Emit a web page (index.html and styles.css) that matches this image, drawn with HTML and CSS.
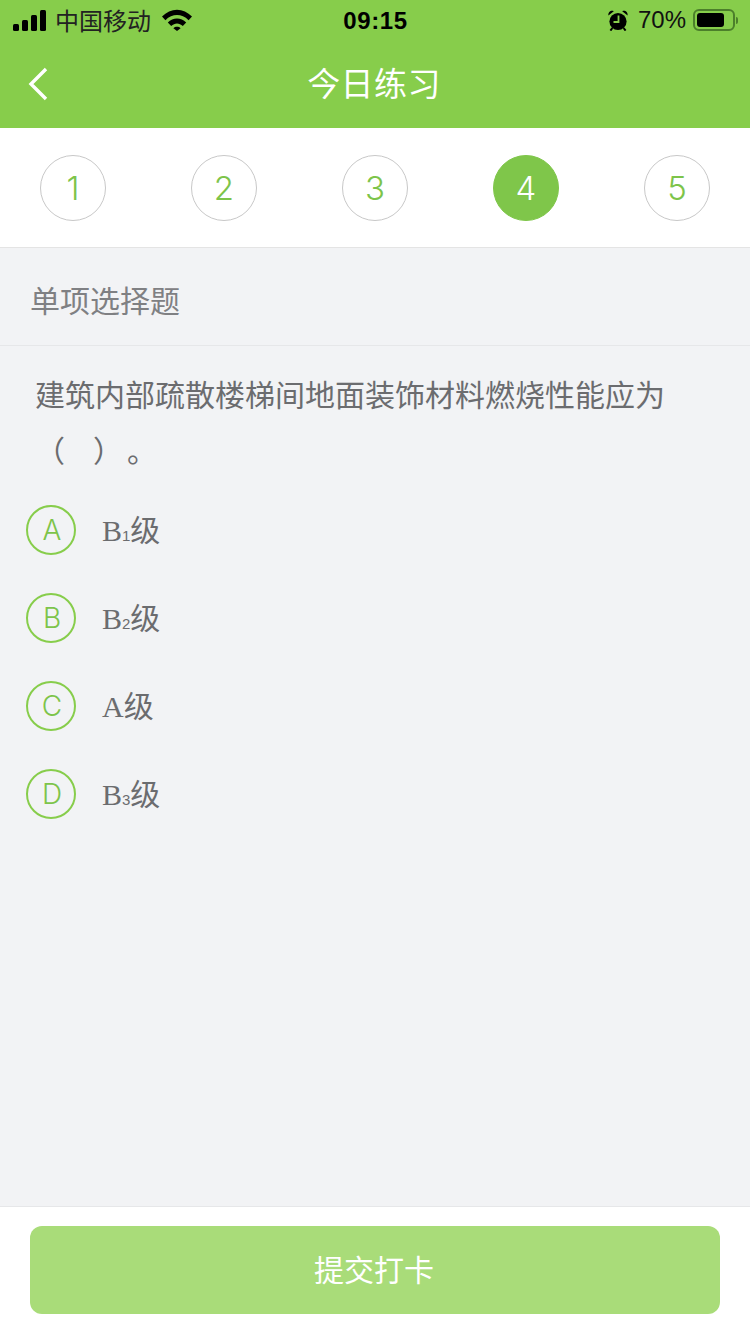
FILE: index.html
```html
<!DOCTYPE html>
<html lang="zh-CN">
<head>
  <meta charset="UTF-8">
  <meta name="viewport" content="width=device-width, initial-scale=1.0">
  <title>今日练习</title>
  <link rel="stylesheet" href="styles.css">
</head>
<body>
  <div class="page">
    <header class="top">
      <!-- iOS status bar -->
      <div class="status">
        <div class="status-left">
          <div class="signal"><i></i><i></i><i></i><i></i></div>
          <span class="carrier">中国移动</span>
          <svg class="wifi" width="30" height="22" viewBox="0 0 30 22">
            <path d="M0 7.6 C 8.5 -1.6 21.5 -1.6 30 7.6 L 26.6 11.2 C 19.6 4.4 10.4 4.4 3.4 11.2 Z"/>
            <path d="M5.8 13.6 C 11 8.2 19 8.2 24.2 13.6 L 20.8 17 C 17.2 13.6 12.8 13.6 9.2 17 Z"/>
            <path d="M11.4 19.2 C 13.4 17.4 16.6 17.4 18.6 19.2 L 15 22 Z"/>
          </svg>
        </div>
        <div class="time">09:15</div>
        <div class="status-right">
          <svg class="alarm" width="20" height="21" viewBox="0 0 20 21">
            <circle cx="10" cy="11.5" r="8.6"/>
            <path d="M0.4 5.5 C 0 2 3 0 5.8 1.2 Z M19.6 5.5 C 20 2 17 0 14.2 1.2 Z"/>
            <path d="M4.4 18 L2.4 20.6 M15.6 18 L17.6 20.6" stroke="#000" stroke-width="2" fill="none"/>
            <path d="M10.5 5.5 V12 H5.5" stroke="#87cd4b" stroke-width="1.8" fill="none"/>
          </svg>
          <span class="percent">70%</span>
          <div class="battery"><div class="battery-fill"></div></div>
          <div class="battery-cap"></div>
        </div>
      </div>
      <!-- nav bar -->
      <div class="nav">
        <svg class="back" width="20" height="34" viewBox="0 0 20 34">
          <path d="M18 2 L3 17 L18 32" fill="none" stroke="#fff" stroke-width="3.4"/>
        </svg>
        <h1>今日练习</h1>
      </div>
    </header>

    <div class="steps">
      <div class="step">1</div>
      <div class="step">2</div>
      <div class="step">3</div>
      <div class="step active">4</div>
      <div class="step">5</div>
    </div>

    <div class="type">单项选择题</div>

    <main class="question">
      <p class="stem">建筑内部疏散楼梯间地面装饰材料燃烧性能应为<br>（<span class="gap"></span>）<span class="stop">。</span></p>
      <div class="options">
        <div class="option"><div class="letter">A</div><div class="answer">B<sub>1</sub>级</div></div>
        <div class="option"><div class="letter">B</div><div class="answer">B<sub>2</sub>级</div></div>
        <div class="option"><div class="letter">C</div><div class="answer">A级</div></div>
        <div class="option"><div class="letter">D</div><div class="answer">B<sub>3</sub>级</div></div>
      </div>
    </main>

    <footer class="bottom">
      <button class="submit">提交打卡</button>
    </footer>
  </div>
</body>
</html>
```

FILE: styles.css
```css
* {
  box-sizing: border-box;
  font-family: 'Liberation Sans', 'Noto Sans CJK SC', sans-serif;
}

html, body {
  margin: 0;
  padding: 0;
}

.page {
  width: 750px;
  height: 1334px;
  display: flex;
  flex-direction: column;
  background-color: #f2f3f5;
  overflow: hidden;
}

/* header */
.top {
  height: 128px;
  background-color: #87cd4b;
}

.status {
  height: 40px;
  display: grid;
  grid-template-columns: 1fr auto 1fr;
  align-items: center;
  padding: 0 12px 0 13px;
  color: #000;
}

.status-left, .status-right {
  display: flex;
  align-items: center;
}

.status-right {
  justify-content: flex-end;
}

.signal {
  display: flex;
  align-items: flex-end;
  gap: 3px;
  height: 21px;
  width: 33px;
}

.signal i {
  display: block;
  width: 6px;
  background-color: #000;
  border-radius: 1.5px;
}

.signal i:nth-child(1) { height: 7px; }
.signal i:nth-child(2) { height: 11px; }
.signal i:nth-child(3) { height: 16px; }
.signal i:nth-child(4) { height: 21px; }

.carrier {
  font-size: 24px;
  line-height: 36px;
  padding-top: 3px;
  margin-left: 9px;
  color: #222;
}

.wifi {
  margin-left: 11px;
}

.time {
  font-size: 24px;
  font-weight: 700;
  letter-spacing: 0.6px;
  padding-top: 2px;
}

.alarm {
  margin-right: 10px;
}

.percent {
  font-size: 24px;
  color: #111;
  margin-right: 7px;
}

.battery {
  width: 42px;
  height: 22px;
  border: 2px solid #4c7f2b;
  border-radius: 6px;
  padding: 2px;
}

.battery-fill {
  width: 27px;
  height: 14px;
  background-color: #000;
  border-radius: 3px;
}

.battery-cap {
  width: 2px;
  height: 7px;
  margin-left: 1px;
  background-color: #4c7f2b;
  border-radius: 0 2px 2px 0;
}

.nav {
  height: 88px;
  display: grid;
  grid-template-columns: 1fr auto 1fr;
  align-items: center;
  padding: 0 0 4px 28px;
}

.back {
  display: block;
  margin-top: 4px;
}

.nav h1 {
  margin: 0;
  font-size: 33px;
  font-weight: 400;
  color: #fff;
  letter-spacing: 0.4px;
  transform: translateX(-15px);
}

/* number row */
.steps {
  height: 120px;
  padding: 0 40px;
  display: flex;
  justify-content: space-between;
  align-items: center;
  background-color: #fff;
  border-bottom: 1px solid #e4e4e4;
}

.step {
  width: 66px;
  height: 66px;
  border: 1px solid #c8c8c8;
  border-radius: 50%;
  display: flex;
  align-items: center;
  justify-content: center;
  font-family: 'Inter', sans-serif;
  font-weight: 300;
  font-size: 33px;
  color: #7dc44a;
}

.step.active {
  background-color: #7fc64a;
  border-color: #7fc64a;
  color: #fff;
}

.type {
  height: 98px;
  padding: 5px 30px 0;
  display: flex;
  align-items: center;
  font-size: 30px;
  color: #7f8083;
  border-bottom: 1px solid #e6e7e9;
}

.question {
  flex: 1;
}

.stem {
  margin: 0;
  padding: 22px 35px 0;
  font-size: 30px;
  line-height: 56px;
  color: #6b6c6f;
  text-spacing-trim: space-all;
}

.gap {
  display: inline-block;
  width: 28px;
}

.stop {
  margin-left: 4px;
}

.options {
  margin-top: 6px;
  padding-left: 26px;
}

.option {
  height: 88px;
  display: flex;
  align-items: center;
}

.letter {
  width: 50px;
  height: 50px;
  padding-left: 2px;
  border: 2px solid #87cd4b;
  border-radius: 50%;
  display: flex;
  align-items: center;
  justify-content: center;
  font-family: 'Inter', sans-serif;
  font-weight: 300;
  font-size: 28px;
  color: #7dc44a;
}

.answer {
  margin-left: 26px;
  padding-bottom: 5px;
  font-family: 'Liberation Serif', 'Noto Sans CJK SC', serif;
  font-size: 30px;
  color: #6b6c6f;
}

.answer sub {
  font-size: 15px;
  font-family: 'Liberation Sans', sans-serif;
  vertical-align: baseline;
}

/* footer */
.bottom {
  height: 128px;
  padding: 19px 30px;
  background-color: #fff;
  border-top: 1px solid #e6e7e9;
}

.submit {
  display: block;
  width: 690px;
  height: 88px;
  padding: 0 2px 5px 0;
  border: none;
  border-radius: 12px;
  background-color: #a9dc79;
  color: #fff;
  font-size: 30px;
}
```
